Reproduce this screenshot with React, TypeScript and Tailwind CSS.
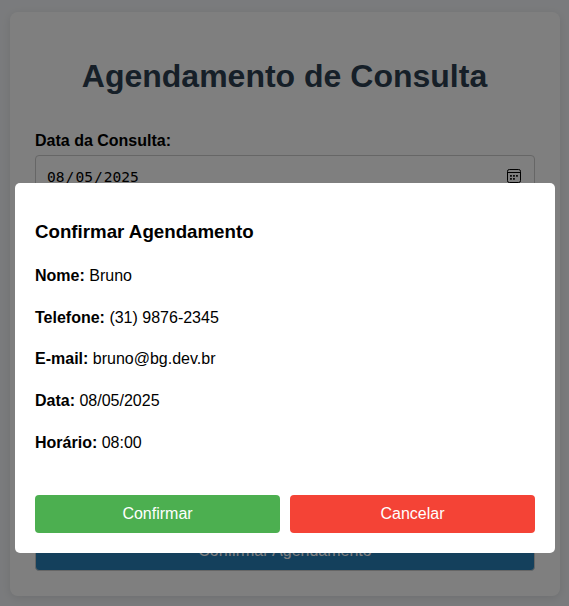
const details = [
  ["Nome:", "Bruno"],
  ["Telefone:", "(31) 9876-2345"],
  ["E-mail:", "bruno@bg.dev.br"],
  ["Data:", "08/05/2025"],
  ["Horário:", "08:00"],
];

function CalendarIcon() {
  return (
    <svg width="14" height="14" viewBox="0 0 14 14" fill="none" className="mb-0.5 shrink-0">
      <rect x="0.5" y="0.5" width="13" height="13" rx="1.8" stroke="black" />
      <path d="M1 3.5h12" stroke="black" />
      <path
        d="M3.1 6.1h1.7v1.7H3.1zM6.1 6.1h1.7v1.7H6.1zM9.1 6.1h1.7v1.7H9.1zM3.1 9.1h1.7v1.7H3.1zM6.1 9.1h1.7v1.7H6.1z"
        fill="black"
      />
    </svg>
  );
}

function DateField() {
  return (
    <div className="flex h-[44px] items-center justify-between rounded border border-[#ccc] px-[11px] pr-[13px]">
      <div className="flex gap-px font-['DejaVu_Sans_Mono','Liberation_Mono',monospace] text-[14.6px] leading-5">
        <span>08</span>
        <span>/</span>
        <span>05</span>
        <span>/</span>
        <span>2025</span>
      </div>
      <CalendarIcon />
    </div>
  );
}

function ConfirmDialog() {
  return (
    <div className="fixed inset-0 bg-black/50 px-[15px] pr-[14px] pt-[183px]">
      <div role="dialog" className="flex h-[370px] flex-col rounded-[5px] bg-white p-5">
        <h3 className="mt-[18px] text-[18.72px] font-bold leading-[21px]">Confirmar Agendamento</h3>
        <div className="mt-[25px] flex flex-col">
          {details.map(([label, value]) => (
            <p key={label} className="h-[41.7px] text-base leading-[18px]">
              <strong>{label}</strong> {value}
            </p>
          ))}
        </div>
        <div className="mt-auto flex gap-2.5">
          <button className="h-[38px] flex-1 rounded bg-[#4caf50] text-base text-white">Confirmar</button>
          <button className="h-[38px] flex-1 rounded bg-[#f44336] text-base text-white">Cancelar</button>
        </div>
      </div>
    </div>
  );
}

export default function App() {
  return (
    <div className="h-screen overflow-hidden bg-[#f5f7fa] px-2.5 pr-[9px] pt-3 font-['Liberation_Sans',Arial,sans-serif] text-black">
      <main className="flex h-[584px] flex-col rounded-lg bg-white px-[25px] pb-[25px] shadow-[0_2px_10px_rgba(0,0,0,0.1)]">
        <h1 className="mt-[39px] pr-px text-center text-[32px] font-bold leading-[51px] text-[#2c3e50]">
          Agendamento de Consulta
        </h1>
        <label className="mb-1 mt-[29px] block text-base font-bold leading-5">Data da Consulta:</label>
        <DateField />
        <button className="mt-auto h-[42px] rounded border border-[#ccc] bg-[#2980b9] pt-0.5 text-base leading-[18px] text-white">
          Confirmar Agendamento
        </button>
      </main>
      <ConfirmDialog />
    </div>
  );
}
